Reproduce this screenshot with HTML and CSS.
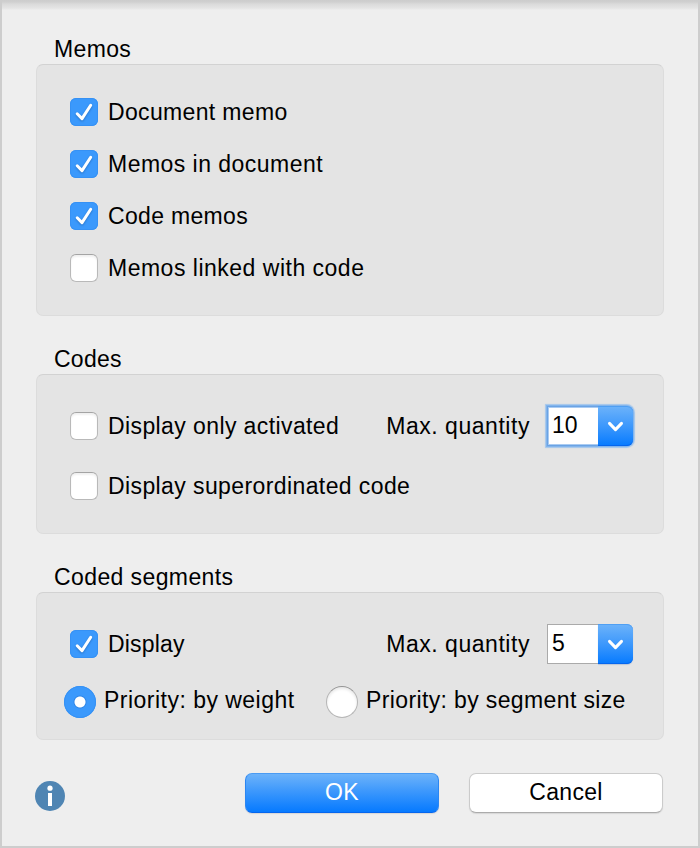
FILE: index.html
```html
<!DOCTYPE html>
<html lang="en">
<head>
<meta charset="utf-8">
<title>Display options</title>
<link rel="stylesheet" href="styles.css">
</head>
<body>
<main class="dialog">
  <section class="section">
    <h2 class="legend t-memos">Memos</h2>
    <div class="group memos">
      <div class="row"><span class="check on"><svg viewBox="0 0 28 28"><path d="M7.2 15.8 12 20.6 20.7 7.3"/></svg></span><span class="label t-docmemo">Document memo</span></div>
      <div class="row"><span class="check on"><svg viewBox="0 0 28 28"><path d="M7.2 15.8 12 20.6 20.7 7.3"/></svg></span><span class="label t-indoc">Memos in document</span></div>
      <div class="row"><span class="check on"><svg viewBox="0 0 28 28"><path d="M7.2 15.8 12 20.6 20.7 7.3"/></svg></span><span class="label t-codememos">Code memos</span></div>
      <div class="row"><span class="check"></span><span class="label t-linked">Memos linked with code</span></div>
    </div>
  </section>
  <section class="section">
    <h2 class="legend t-codes">Codes</h2>
    <div class="group codes">
      <div class="row"><span class="check"></span><span class="label t-activated">Display only activated</span>
        <div class="quantity"><span class="t-max">Max. quantity</span><div class="combo focused"><span class="value">10</span><span class="arrow"><svg viewBox="0 0 35 40"><path d="M11.5 17.4 17.5 23.6 23.5 17.4"/></svg></span></div></div>
      </div>
      <div class="row"><span class="check"></span><span class="label t-super">Display superordinated code</span></div>
    </div>
  </section>
  <section class="section">
    <h2 class="legend t-segments">Coded segments</h2>
    <div class="group segments">
      <div class="row"><span class="check on"><svg viewBox="0 0 28 28"><path d="M7.2 15.8 12 20.6 20.7 7.3"/></svg></span><span class="label t-display">Display</span>
        <div class="quantity"><span class="t-max">Max. quantity</span><div class="combo"><span class="value">5</span><span class="arrow"><svg viewBox="0 0 35 40"><path d="M11.5 17.4 17.5 23.6 23.5 17.4"/></svg></span></div></div>
      </div>
      <div class="radios">
        <div class="option weight"><span class="radio on"></span><span class="t-weight">Priority: by weight</span></div>
        <div class="option"><span class="radio"></span><span class="t-size">Priority: by segment size</span></div>
      </div>
    </div>
  </section>
  <footer class="footer">
    <svg class="info" viewBox="0 0 30 30"><circle cx="15" cy="15" r="15" fill="#4f85b3"/><circle cx="15" cy="7.2" r="2.6" fill="#fff"/><path d="M13 12h4v13h-4z" fill="#fff"/></svg>
    <button class="button primary"><span class="t-ok">OK</span></button>
    <button class="button"><span class="t-cancel">Cancel</span></button>
  </footer>
</main>
</body>
</html>
```
FILE: styles.css
```css
* { box-sizing: border-box; }
body { margin: 0; }
.dialog {
  width: 700px;
  height: 848px;
  padding: 35px 34px 0;
  border: 2px solid #cdcdcd;
  border-top: 0;
  background: linear-gradient(#cdcdcd 0, #d0d0d0 2px, #dadada 4px, #e4e4e4 8px, #eee 10px, #eee);
  font: 23px/28px "Liberation Sans", Arial, sans-serif;
  color: #000;
  white-space: nowrap;
}
.section { margin-bottom: 29px; }
.legend {
  margin: 0 0 1px 18px;
  height: 28px;
  font: inherit;
}
.group {
  border: 1px solid #dcdcdc;
  border-top-color: #d2d2d2;
  border-radius: 7px;
  background: #e4e4e4;
  display: flex;
  flex-direction: column;
  padding-left: 33px;
}
.memos { height: 252px; padding-top: 33px; gap: 24px; }
.codes { height: 160px; padding-top: 37px; gap: 32px; }
.segments { height: 148px; padding-top: 37px; gap: 28px; }
.row { display: flex; height: 28px; padding-right: 30px; }
.check {
  width: 28px;
  height: 28px;
  margin-right: 10px;
  border: 1px solid #b9b9b9;
  border-top-color: #a4a4a4;
  border-radius: 6px;
  background: #fff;
  box-shadow: inset 0 2px 2px #f0f0f0;
}
.check.on {
  border: 0;
  background: #3b99fc;
  box-shadow: inset 0 0 0 1px #3691f4;
}
.check svg, .arrow svg {
  display: block;
  fill: none;
  stroke: #fff;
  stroke-width: 3;
  stroke-linecap: round;
  stroke-linejoin: round;
}
.check svg { filter: drop-shadow(0 1px 1px #2671c5); }
.quantity { display: flex; margin-left: auto; }
.combo {
  display: flex;
  width: 86px;
  height: 40px;
  margin: -6px 0 0 17px;
  border-radius: 0 7px 7px 0;
}
.value {
  width: 51px;
  padding: 4px 0 0 4px;
  border: 1px solid #aaa;
  border-right: 0;
  background: #fff;
}
.arrow {
  width: 35px;
  border-radius: 0 6px 6px 0;
  background: linear-gradient(#6db3fa, #3d98fc 50%, #067aff);
  box-shadow: inset 0 1px #4f9ff3, inset 0 -1px #0566ee, 0 1px 1px #b9c5d6;
}
.focused { box-shadow: 0 0 0 1px #83b5ec, 0 0 1px 1.5px #a3c6ec; }
.focused .value {
  border-color: #6ba3e4;
  box-shadow: inset 1px 1px #a9cbf2, inset 0 -1px #a9cbf2;
}
.focused .arrow { box-shadow: inset 0 1px #4f9ff3, inset 0 -1px #0566ee; }
.radios { display: flex; margin-left: -6px; }
.option { display: flex; }
.weight { width: 262px; }
.radio {
  width: 32px;
  height: 32px;
  margin-right: 8px;
  border: 1px solid #b6b6b6;
  border-top-color: #949494;
  border-radius: 50%;
  background: #fff;
  box-shadow: inset 0 2px 3px #e8e8e8;
}
.radio.on {
  border: 0;
  background: radial-gradient(circle, #fff 5px, #2f86e8 6px, #3b99fc 7px);
  box-shadow: inset 0 0 0 1px #3691f4;
}
.footer { display: flex; padding: 4px 1px 0 0; align-items: flex-start; }
.info { width: 30px; height: 30px; margin: 8px 180px 0 -1px; }
.button {
  width: 194px;
  height: 40px;
  padding: 5px 0 7px;
  border: 1px solid #cbcbcb;
  border-bottom-color: #ababab;
  border-radius: 7px;
  background: #fff;
  box-shadow: 0 1px 1px #d6d6d6;
  font: inherit;
  line-height: 26px;
  color: #000;
}
.primary {
  margin-right: 30px;
  border-color: #4a9bf3 #2b86f2 #0566ee;
  background: linear-gradient(#6db3fa, #3d98fc 45%, #067aff);
  color: #fff;
}

/* Label tracking */
.t-memos { letter-spacing: .35px; }
.t-docmemo { letter-spacing: .34px; }
.t-indoc { letter-spacing: .47px; }
.t-codememos { letter-spacing: .32px; }
.t-linked { letter-spacing: .5px; }
.t-codes { letter-spacing: .25px; }
.t-activated { letter-spacing: .4px; }
.t-super { letter-spacing: .4px; }
.t-max { letter-spacing: .54px; }
.t-segments { letter-spacing: .4px; }
.t-display { letter-spacing: .2px; }
.t-weight { letter-spacing: .48px; }
.t-size { letter-spacing: .37px; }
.t-ok { letter-spacing: .3px; }
.t-cancel { letter-spacing: .3px; }
```
